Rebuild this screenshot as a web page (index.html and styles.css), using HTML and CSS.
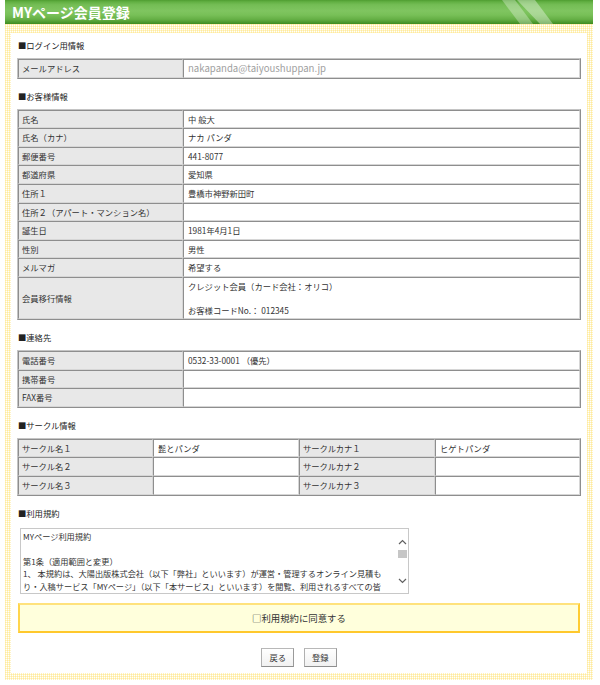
FILE: index.html
```html
<!DOCTYPE html>
<html lang="ja">
<head>
<meta charset="utf-8">
<title>MYページ会員登録</title>
<link rel="stylesheet" href="styles.css">
</head>
<body>
<div class="page">
  <div class="title">
    <h1>MYページ会員登録</h1>
    <svg class="title-deco" viewBox="0 0 588 24" preserveAspectRatio="none" aria-hidden="true">
      <polygon points="497,0 510,0 528,24 515,24" fill="#ffffff" fill-opacity="0.3"/>
      <polygon points="512,0 530,0 548,24 535,24" fill="#ffffff" fill-opacity="0.36"/>
    </svg>
  </div>
  <div class="frame">
    <div class="inner">
      <h2 class="sec">■ログイン用情報</h2>
      <table class="tbl">
        <colgroup><col class="c-lab"><col></colgroup>
        <tr><th>メールアドレス</th><td class="mail">nakapanda@taiyoushuppan.jp</td></tr>
      </table>

      <h2 class="sec">■お客様情報</h2>
      <table class="tbl">
        <colgroup><col class="c-lab"><col></colgroup>
        <tr><th>氏名</th><td>中 般大</td></tr>
        <tr><th>氏名（カナ）</th><td>ナカ パンダ</td></tr>
        <tr><th>郵便番号</th><td>441-8077</td></tr>
        <tr><th>都道府県</th><td>愛知県</td></tr>
        <tr><th>住所１</th><td>豊橋市神野新田町</td></tr>
        <tr><th>住所２（アパート・マンション名）</th><td></td></tr>
        <tr><th>誕生日</th><td>1981年4月1日</td></tr>
        <tr><th>性別</th><td>男性</td></tr>
        <tr><th>メルマガ</th><td>希望する</td></tr>
        <tr><th>会員移行情報</th><td class="multi">クレジット会員（カード会社：オリコ）<br><br>お客様コードNo.： 012345</td></tr>
      </table>

      <h2 class="sec">■連絡先</h2>
      <table class="tbl">
        <colgroup><col class="c-lab"><col></colgroup>
        <tr><th>電話番号</th><td>0532-33-0001 （優先）</td></tr>
        <tr><th>携帯番号</th><td></td></tr>
        <tr><th>FAX番号</th><td></td></tr>
      </table>

      <h2 class="sec">■サークル情報</h2>
      <table class="tbl">
        <colgroup><col class="c4a"><col class="c4b"><col class="c4c"><col></colgroup>
        <tr><th>サークル名１</th><td>髭とパンダ</td><th>サークルカナ１</th><td>ヒゲトパンダ</td></tr>
        <tr><th>サークル名２</th><td></td><th>サークルカナ２</th><td></td></tr>
        <tr><th>サークル名３</th><td></td><th>サークルカナ３</th><td></td></tr>
      </table>

      <h2 class="sec sec-terms">■利用規約</h2>
      <div class="terms">
        <div class="terms-text">MYページ利用規約<br><br>第1条（適用範囲と変更）<br>1、 本規約は、大陽出版株式会社（以下「弊社」といいます）が運営・管理するオンライン見積も<br>り・入稿サービス「MYページ」（以下「本サービス」といいます）を閲覧、利用されるすべての皆</div>
        <div class="scrollbar">
          <svg class="chev chev-up" viewBox="0 0 9 6" aria-hidden="true"><polyline points="1,5 4.5,1.5 8,5" fill="none" stroke="#606060" stroke-width="1.2"/></svg>
          <div class="thumb"></div>
          <div class="track-space"></div>
          <svg class="chev chev-down" viewBox="0 0 9 6" aria-hidden="true"><polyline points="1,1 4.5,4.5 8,1" fill="none" stroke="#606060" stroke-width="1.2"/></svg>
        </div>
      </div>

      <div class="agree">□利用規約に同意する</div>

      <div class="buttons">
        <span class="btn">戻る</span>
        <span class="btn">登録</span>
      </div>
    </div>
  </div>
</div>
</body>
</html>
```

FILE: styles.css
```css
html, body {
  margin: 0;
  padding: 0;
  background: #ffffff;
}

body {
  font-family: "Noto Sans CJK JP", "Noto Sans", sans-serif;
  color: #333333;
  font-size: 8.3px;
}

.page {
  width: 588px;
  margin-left: 5px;
}

.title {
  position: relative;
  height: 24px;
  background: linear-gradient(to bottom,
    #4f9d31 0%, #62b043 8%, #74bd55 20%, #7fc560 45%, #78c058 62%,
    #66b046 80%, #4e9b30 92%, #3d8b1f 100%);
  overflow: hidden;
}

.title h1 {
  margin: 0;
  padding-left: 7px;
  line-height: 24px;
  font-size: 14px;
  font-weight: bold;
  color: #ffffff;
  letter-spacing: 0;
}

.title-deco {
  position: absolute;
  left: 0;
  top: 0;
  width: 588px;
  height: 24px;
}

.frame {
  padding: 9px 6px 7px 6px;
  background-color: #ffffff;
  background-image:
    linear-gradient(90deg, rgba(255, 226, 110, 0.45) 50%, transparent 50%),
    linear-gradient(rgba(255, 226, 110, 0.4) 50%, transparent 50%);
  background-size: 2px 2px, 2px 2px;
}

.inner {
  background: #ffffff;
  padding: 0 6px 6px 6px;
  overflow: hidden;
}

.sec {
  margin: 11px 1px 7px 1px;
  font-size: 8.3px;
  font-weight: normal;
  line-height: 12px;
  color: #222222;
}

.sec:first-child {
  margin-top: 6px;
}

.sec-terms {
  margin-bottom: 9px;
}

.tbl {
  width: 100%;
  table-layout: fixed;
  border-collapse: separate;
  border-spacing: 0;
  border: 1px solid;
  border-color: #c4c4c4 #8e8e8e #8e8e8e #c4c4c4;
  font-size: 8.3px;
}

.tbl th,
.tbl td {
  border: 1px solid;
  border-color: #8e8e8e #d6d6d6 #d6d6d6 #8e8e8e;
  padding: 2px 3px;
  line-height: 12.6px;
  text-align: left;
  font-weight: normal;
  vertical-align: middle;
  white-space: nowrap;
  overflow: hidden;
}

.tbl th {
  background: #e8e8e8;
  color: #333333;
}

.tbl td {
  background: #ffffff;
  padding-left: 4px;
  color: #333333;
}

.c-lab { width: 165px; }
.c4a { width: 135px; }
.c4b { width: 146px; }
.c4c { width: 136px; }

.tbl td.mail {
  font-size: 9.6px;
  color: #a0a0a0;
}

.tbl td.multi {
  line-height: 12px;
  padding-top: 2px;
  padding-bottom: 2px;
}

.terms {
  display: flex;
  width: 387px;
  height: 64px;
  margin: 0 0 0 3px;
  border: 1px solid #c8c8c8;
  background: #ffffff;
  overflow: hidden;
}

.terms-text {
  flex: 1;
  padding: 1px 2px;
  font-size: 8.2px;
  line-height: 12.6px;
  white-space: nowrap;
  overflow: hidden;
  color: #333333;
}

.scrollbar {
  width: 12px;
  flex: none;
  display: flex;
  flex-direction: column;
  align-items: center;
  background: #ffffff;
}

.chev {
  width: 9px;
  height: 6px;
  flex: none;
}

.chev-up {
  margin-top: 10px;
}

.thumb {
  width: 9px;
  height: 8px;
  margin-top: 5px;
  background: #c6c6c6;
  flex: none;
}

.track-space {
  height: 20px;
  flex: none;
}

.agree {
  margin: 9px 1px 0 1px;
  height: 26px;
  line-height: 26px;
  border: 2px solid;
  border-color: #ffe27c #ffcc33 #ffc82c #ffd54e;
  background: #ffffdc;
  text-align: center;
  font-size: 9.4px;
  color: #333333;
}

.buttons {
  display: flex;
  justify-content: center;
  gap: 10px;
  margin-top: 15px;
}

.btn {
  display: block;
  height: 17px;
  line-height: 17px;
  padding: 0 7px;
  border: 1px solid;
  border-color: #b8b8b8 #9a9a9a #8e8e8e #b0b0b0;
  background: linear-gradient(to bottom, #ffffff, #f1f1f1);
  font-size: 8.3px;
  color: #333333;
}
```
